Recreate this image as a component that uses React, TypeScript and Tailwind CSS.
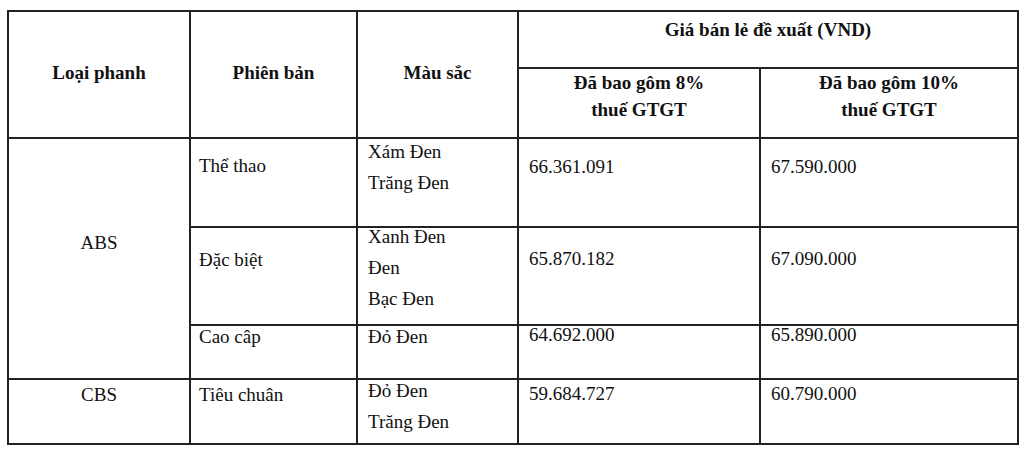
const serif = { fontFamily: '"Liberation Serif", "Times New Roman", serif' };

type Row = {
  version: string;
  versionPad: string;
  colors: string[];
  colorShift: string;
  price8: string;
  price10: string;
  pricePad: string;
  height: string;
};

const ABS_ROWS: Row[] = [
  {
    version: "Thể thao",
    versionPad: "pt-[11px]",
    colors: ["Xám Đen", "Trăng Đen"],
    colorShift: "-mt-[3px]",
    price8: "66.361.091",
    price10: "67.590.000",
    pricePad: "pt-[12px]",
    height: "h-[89px]",
  },
  {
    version: "Đặc biệt",
    versionPad: "pt-[16px]",
    colors: ["Xanh Đen", "Đen", "Bạc Đen"],
    colorShift: "-mt-[7px]",
    price8: "65.870.182",
    price10: "67.090.000",
    pricePad: "pt-[15px]",
    height: "h-[98px]",
  },
  {
    version: "Cao câp",
    versionPad: "pt-0 -mt-[5px]",
    colors: ["Đỏ Đen"],
    colorShift: "-mt-[5px]",
    price8: "64.692.000",
    price10: "65.890.000",
    pricePad: "pt-0 -mt-[7px]",
    height: "h-[54px]",
  },
];

const cell = "border-2 border-[#222] align-top";

export default function App() {
  return (
    <div className="min-h-screen bg-white pt-[10px] pl-[7px] text-[19px] text-[#111]" style={serif}>
      <table className="w-[1010px] table-fixed border-collapse">
        <colgroup>
          <col className="w-[182px]" />
          <col className="w-[167px]" />
          <col className="w-[161px]" />
          <col className="w-[242px]" />
          <col className="w-[258px]" />
        </colgroup>
        <thead>
          <tr className="h-[57px]">
            <th rowSpan={2} className="border-2 border-[#222] pb-[4px] align-middle font-bold leading-[31px]">
              Loại phanh
            </th>
            <th rowSpan={2} className="border-2 border-[#222] pb-[4px] align-middle font-bold leading-[31px]">
              Phiên bản
            </th>
            <th rowSpan={2} className="border-2 border-[#222] pb-[4px] align-middle font-bold leading-[31px]">
              Màu sắc
            </th>
            <th colSpan={2} className="h-[57px] border-2 border-[#222] pt-[2px] align-top font-bold leading-[31px]">
              Giá bán lẻ đề xuất (VND)
            </th>
          </tr>
          <tr className="h-[70px]">
            <th className="h-[70px] border-2 border-[#222] align-top font-bold leading-[27px]">
              Đã bao gôm 8%
              <br />
              thuế GTGT
            </th>
            <th className="border-2 border-[#222] align-top font-bold leading-[27px]">
              Đã bao gôm 10%
              <br />
              thuế GTGT
            </th>
          </tr>
        </thead>
        <tbody className="leading-[31px]">
          {ABS_ROWS.map((row, index) => (
            <tr key={row.version}>
              {index === 0 && (
                <td rowSpan={3} className={`${cell} pt-[88px] text-center`}>
                  ABS
                </td>
              )}
              <td className={`${cell} ${row.height} pl-[8px]`}>
                <div className={row.versionPad}>{row.version}</div>
              </td>
              <td className={`${cell} pl-[10px]`}>
                <div className={row.colorShift}>
                  {row.colors.map((color) => (
                    <div key={color}>{color}</div>
                  ))}
                </div>
              </td>
              <td className={`${cell} pl-[10px]`}>
                <div className={row.pricePad}>{row.price8}</div>
              </td>
              <td className={`${cell} pl-[10px]`}>
                <div className={row.pricePad}>{row.price10}</div>
              </td>
            </tr>
          ))}
          <tr>
            <td className={`${cell} h-[65px] text-center`}>
              <div className="-mt-[1px]">CBS</div>
            </td>
            <td className={`${cell} pl-[8px]`}>
              <div className="-mt-[1px]">Tiêu chuân</div>
            </td>
            <td className={`${cell} pl-[10px]`}>
              <div className="-mt-[5px]">
                <div>Đỏ Đen</div>
                <div>Trăng Đen</div>
              </div>
            </td>
            <td className={`${cell} pl-[10px]`}>
              <div className="-mt-[2px]">59.684.727</div>
            </td>
            <td className={`${cell} pl-[10px]`}>
              <div className="-mt-[2px]">60.790.000</div>
            </td>
          </tr>
        </tbody>
      </table>
    </div>
  );
}
